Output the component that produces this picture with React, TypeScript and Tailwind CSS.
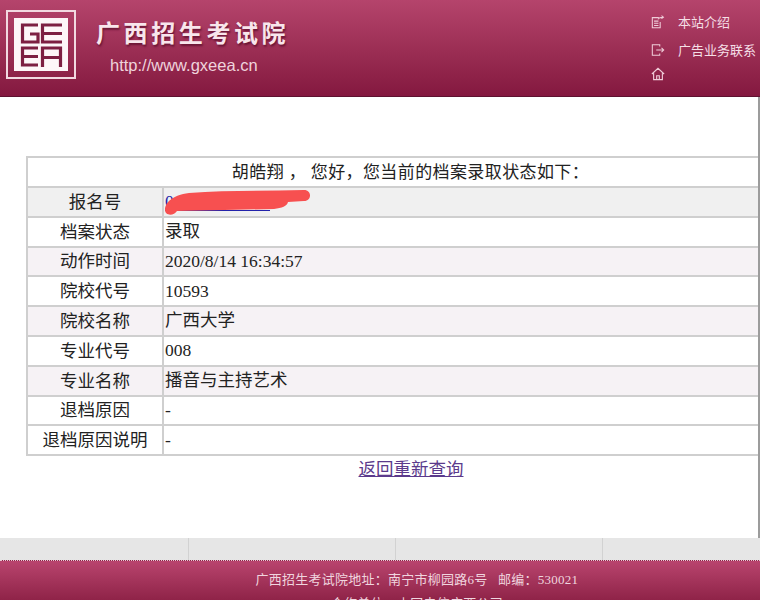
const cjk = { fontFamily: '"Liberation Serif", "Noto Sans CJK SC", serif' };
const sans = { fontFamily: '"Noto Sans CJK SC", sans-serif' };

const rows: [string, string, string][] = [
  ["报名号", "", "bg-[#f0f0f0]"],
  ["档案状态", "录取", "bg-white"],
  ["动作时间", "2020/8/14 16:34:57", "bg-[#f6f2f5]"],
  ["院校代号", "10593", "bg-white"],
  ["院校名称", "广西大学", "bg-[#f6f2f5]"],
  ["专业代号", "008", "bg-white"],
  ["专业名称", "播音与主持艺术", "bg-[#f6f2f5]"],
  ["退档原因", "-", "bg-white"],
  ["退档原因说明", "-", "bg-white"],
];

function Logo() {
  return (
    <div className="ml-[6px] mt-[10px] w-[70px] h-[69px] shrink-0 border-[2px] border-[#f2d9e1] p-[6px]">
      <div className="w-full h-full bg-[#fdf6f8]">
        <svg viewBox="0 0 54 53" className="w-full h-full">
          <g fill="none" stroke="#7d1f42" strokeWidth="3.2">
            <path d="M24 7H8.500v17H24v-8h-8" />
            <path d="M48 7H28.500v17H48M28.500 15.500H48" />
            <path d="M24 30H8.500v17H24M8.500 38.500H24" />
            <path d="M28.500 49V30H46.500v19M28.500 39.500h18" />
          </g>
        </svg>
      </div>
    </div>
  );
}

export default function App() {
  return (
    <div className="w-[760px] h-[600px] overflow-hidden bg-white flex flex-col" style={cjk}>
      <header className="h-[97px] shrink-0 flex bg-gradient-to-b from-[#b5446c] to-[#84183f] border-b border-[#5e1230]">
        <Logo />
        <div className="ml-[20px] flex flex-col">
          <div className="mt-[16px] text-[24px] leading-[32px] font-bold tracking-[3.6px] text-[#f8e6ec] whitespace-nowrap [text-shadow:1px_2px_2px_#6a1535]" style={sans}>
            广西招生考试院
          </div>
          <div className="mt-[8px] ml-[14px] text-[16.500px] leading-[18px] text-[#efd3dc] whitespace-nowrap" style={{ fontFamily: '"Liberation Sans", sans-serif' }}>
            http://www.gxeea.cn
          </div>
        </div>
        <div className="ml-auto w-[109px] pt-[13px] text-[13px] leading-[18px] text-[#f5dfe6] flex flex-col" style={sans}>
          <div className="h-[28px] flex items-start">
            <svg viewBox="0 0 16 16" className="w-[14px] h-[14px] mt-[2px] shrink-0" fill="none" stroke="#f0cdd9" strokeWidth="1.2">
              <path d="M9 3H1.500v11.500h9V8M3.500 7h5M3.500 9.500h5M3.500 12h5" />
              <path d="M8 5c1-2 3-2.500 6-2.500M12 .8l2.200 1.700-2.200 1.700" />
            </svg>
            <span className="ml-[13px]">本站介绍</span>
          </div>
          <div className="h-[27px] flex items-start">
            <svg viewBox="0 0 16 16" className="w-[14px] h-[14px] mt-[2px] shrink-0" fill="none" stroke="#f0cdd9" strokeWidth="1.2">
              <path d="M10 4V2H1.500v12H10v-2M6 8h8.500M12 5.500 14.500 8 12 10.500" />
            </svg>
            <span className="ml-[13px] whitespace-nowrap">广告业务联系</span>
          </div>
          <svg viewBox="0 0 16 16" className="w-[14px] h-[14px] -mt-[1px]" fill="none" stroke="#f0cdd9" strokeWidth="1.3">
            <path d="M1 8l7-6.500L15 8M3 7v7.500h10V7M6.500 14.500V10h3v4.500" />
          </svg>
        </div>
      </header>

      <main className="flex-1 flex flex-col border-r-2 border-[#9c9c9c]">
        <div className="mt-[59px] ml-[26px] border-2 border-[#cfcfcf] border-r-0 shrink-0">
          <div className="h-[28px] text-center text-[17px] leading-[30px] tracking-[0.4px] text-[#222] pl-[35px] whitespace-nowrap">
            胡皓翔 ，&nbsp;您好，您当前的档案录取状态如下：
          </div>
          {rows.map(([label, value, bg], i) => (
            <div key={label} className={`h-[29.8px] flex border-t-2 border-[#cfcfcf] text-[17.500px] text-[#222] ${bg}`}>
              <div className="w-[136px] shrink-0 flex items-center justify-center border-r-2 border-[#cfcfcf]">{label}</div>
              <div className="flex-1 flex items-center pl-[1px] pb-[1px] relative">
                {i === 0 ? (
                  <>
                    <span className="w-[105px] h-[20px] border-b border-[#2222aa] text-[#2626a8] leading-[20px]">0</span>
                    <svg viewBox="0 0 150 30" className="absolute left-0 -top-[1px] w-[150px] h-[30px]">
                      <path d="M1 23C1 16 8 8 25 6C60 3 100 4 140 3C148 3 148 14 140 14L124 15C123 19 118 21 110 22L60 23L13 24C10 29 1 29 1 23Z" fill="#f75050" />
                    </svg>
                  </>
                ) : (
                  value
                )}
              </div>
            </div>
          ))}
        </div>
        <div className="pl-[64px] text-center">
          <a href="#" className="text-[17.500px] leading-[26px] text-[#5b3a8c] underline">返回重新查询</a>
        </div>
      </main>

      <div className="h-[22px] shrink-0 grid grid-cols-[189px_207px_207px_1fr] bg-[#e6e6e6]">
        <div className="border-r border-[#d2d2d2]" />
        <div className="border-r border-[#d2d2d2]" />
        <div className="border-r border-[#d2d2d2]" />
        <div />
      </div>
      <footer className="h-[40px] shrink-0 bg-gradient-to-b from-[#b9446e] to-[#8f2348] border-t border-dotted border-[#e8c8d3] pl-[74px] text-center text-[13px] leading-[20px] tracking-[0.25px] text-[#f0d5df] overflow-hidden">
        <div className="mt-[9px]">广西招生考试院地址：南宁市柳园路6号 &nbsp; 邮编：530021</div>
        <div className="mt-[9px] leading-[10px] h-[10px]">合作单位：中国电信广西公司</div>
      </footer>
    </div>
  );
}
